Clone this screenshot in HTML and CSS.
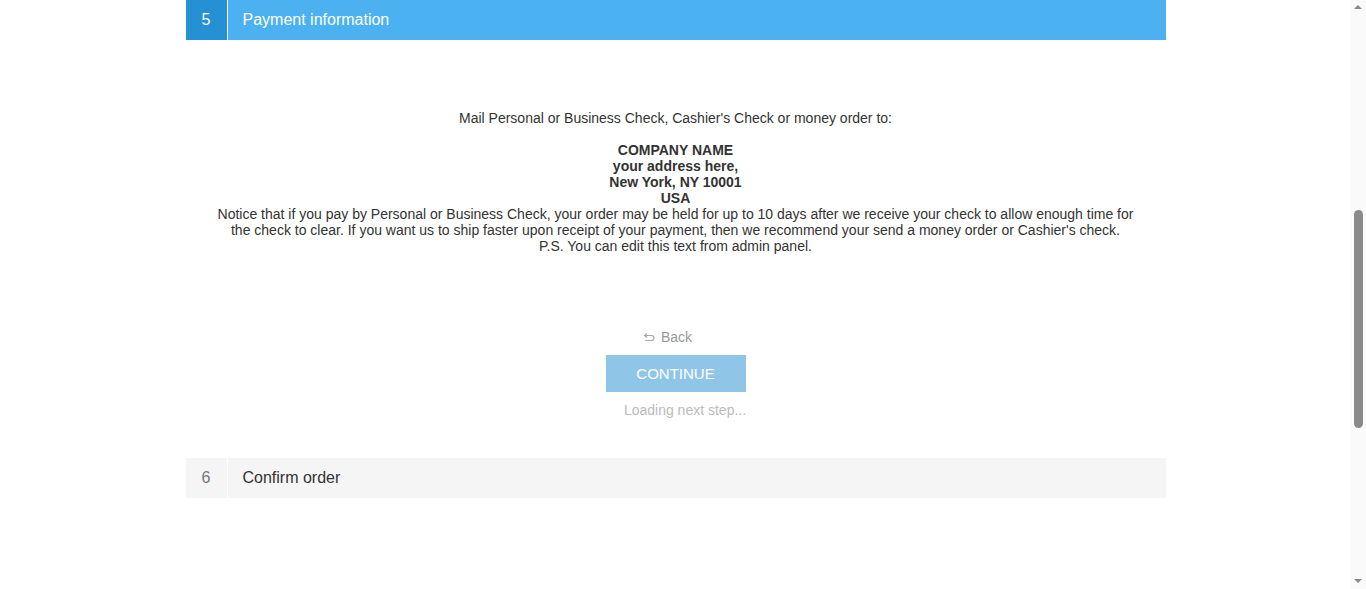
FILE: index.html
```html
<!DOCTYPE html>
<html>
<head>
<meta charset="utf-8">
<link rel="stylesheet" href="styles.css">
</head>
<body>
<div class="page">
  <div class="checkout">
    <div class="step step-active">
      <div class="step-num">5</div>
      <div class="step-title">Payment information</div>
    </div>
    <div class="step-body">
      <div class="payment-text">
        Mail Personal or Business Check, Cashier's Check or money order to:<br><br>
        <b>COMPANY NAME<br>your address here,<br>New York, NY 10001<br>USA</b><br>
        Notice that if you pay by Personal or Business Check, your order may be held for up to 10 days after we receive your check to allow enough time for the check to clear. If you want us to ship faster upon receipt of your payment, then we recommend your send a money order or Cashier's check.<br>
        P.S. You can edit this text from admin panel.
      </div>
      <div class="buttons">
        <a class="back"><svg class="back-icon" width="12" height="10" viewBox="0 0 12 10"><path d="M4 1.5 L1.5 3.5 L4 5.5 M1.5 3.5 H8.5 A2.5 2.5 0 0 1 8.5 8.5 H2" fill="none" stroke="#aaa" stroke-width="1.2"/></svg><span>Back</span></a>
        <button class="continue">CONTINUE</button>
        <div class="loading">Loading next step...</div>
      </div>
    </div>
    <div class="step step-inactive">
      <div class="step-num">6</div>
      <div class="step-title">Confirm order</div>
    </div>
  </div>
</div>
<div class="scrollbar">
  <div class="arrow-up"></div>
  <div class="thumb"></div>
  <div class="arrow-down"></div>
</div>
</body>
</html>
```
FILE: styles.css
```css
html, body {
  margin: 0;
  padding: 0;
  overflow: hidden;
  background: #fff;
}
body {
  font-family: "Liberation Sans", Arial, sans-serif;
  color: #333;
}
.page {
  width: 1351px;
  height: 589px;
}
.checkout {
  width: 980px;
  margin: 0 auto;
}
.step {
  display: flex;
  height: 40px;
  align-items: stretch;
  font-size: 16px;
}
.step-num {
  width: 41px;
  display: flex;
  align-items: center;
  justify-content: center;
  border-right: 1px solid #fff;
}
.step-title {
  flex: 1;
  display: flex;
  align-items: center;
  padding-left: 15px;
}
.step-active {
  background: #4bb1f0;
  color: #fff;
}
.step-active .step-num {
  background: #2590d3;
}
.step-inactive {
  background: #f5f5f5;
  color: #333;
}
.step-inactive .step-num {
  color: #777;
}
.step-body {
  padding: 70px 30px 40px;
}
.payment-text {
  text-align: center;
  font-size: 14px;
  line-height: 16px;
  color: #333;
}
.buttons {
  margin-top: 75px;
  display: flex;
  flex-direction: column;
  align-items: center;
}
.back {
  display: flex;
  align-items: center;
  gap: 6px;
  font-size: 14px;
  line-height: 16px;
  color: #999;
  margin-right: 16px;
}
.back-icon {
  display: block;
}
.continue {
  margin-top: 10px;
  width: 140px;
  height: 37px;
  border: 0;
  background: #8fc6e8;
  color: #fff;
  font-family: "Liberation Sans", Arial, sans-serif;
  font-size: 15px;
  padding: 0;
}
.loading {
  margin-top: 10px;
  font-size: 14px;
  line-height: 16px;
  color: #bbb;
  padding-left: 19px;
}
.scrollbar {
  position: fixed;
  top: 0;
  right: 0;
  width: 15px;
  height: 589px;
  background: #fafafa;
}
.thumb {
  position: absolute;
  left: 3px;
  top: 210px;
  width: 9px;
  height: 218px;
  border-radius: 5px;
  background: #8a8a8a;
}
.arrow-up, .arrow-down {
  position: absolute;
  left: 3px;
  width: 0;
  height: 0;
  border-left: 4.5px solid transparent;
  border-right: 4.5px solid transparent;
}
.arrow-up {
  top: 5px;
  border-bottom: 4px solid #888;
}
.arrow-down {
  bottom: 6px;
  border-top: 4px solid #888;
}
```
